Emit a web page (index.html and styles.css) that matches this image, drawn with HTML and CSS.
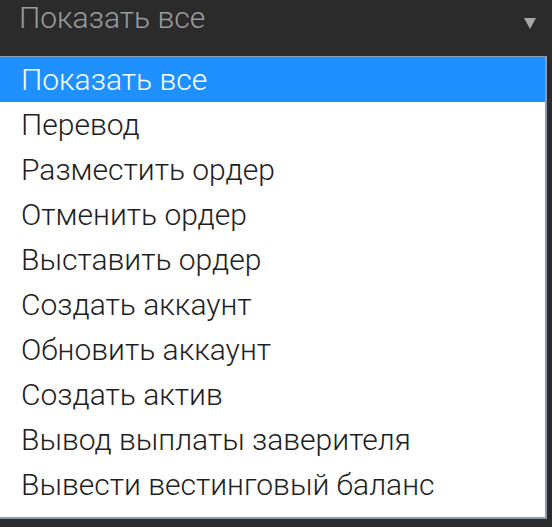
FILE: index.html
```html
<!DOCTYPE html>
<html lang="ru">
<head>
    <meta charset="UTF-8">
    <meta name="viewport" content="width=device-width, initial-scale=1.0">
    <title>Фильтр операций</title>
    <link rel="stylesheet" href="styles.css">
</head>
<body>
    <div class="picker">
        <div class="picker-value">
            <span>Показать все</span>
            <span class="picker-arrow"></span>
        </div>
        <ul class="picker-list">
            <li class="selected">Показать все</li>
            <li>Перевод</li>
            <li>Разместить ордер</li>
            <li>Отменить ордер</li>
            <li>Выставить ордер</li>
            <li>Создать аккаунт</li>
            <li>Обновить аккаунт</li>
            <li>Создать актив</li>
            <li>Вывод выплаты заверителя</li>
            <li>Вывести вестинговый баланс</li>
        </ul>
    </div>
</body>
</html>
```

FILE: styles.css
```css
body {
    margin: 0;
    background-color: #2b2b2b;
    font-family: Roboto, "Noto Sans", sans-serif;
    font-weight: 300;
    font-size: 30px;
}
.picker {
    width: 547px;
    height: 527px;
}
.picker-value {
    display: flex;
    justify-content: space-between;
    align-items: flex-start;
    height: 56px;
    padding: 0 11px 0 19px;
    box-sizing: border-box;
    color: #9c9c9c;
}
.picker-arrow {
    width: 0;
    height: 0;
    margin-top: 18px;
    border-left: 6px solid transparent;
    border-right: 6px solid transparent;
    border-top: 11px solid #a8a8a8;
}
.picker-list {
    list-style: none;
    margin: 0;
    padding: 0 0 10px 0;
    background-color: #ffffff;
    border: 1px solid #8e9aab;
    border-left: none;
    border-right-width: 2px;
    border-bottom-width: 2px;
    color: #1e1e1e;
}
.picker-list li {
    height: 45px;
    line-height: 45px;
    padding-left: 21px;
}
.picker-list li.selected {
    background-color: #1e90ff;
    color: #ffffff;
}
```
